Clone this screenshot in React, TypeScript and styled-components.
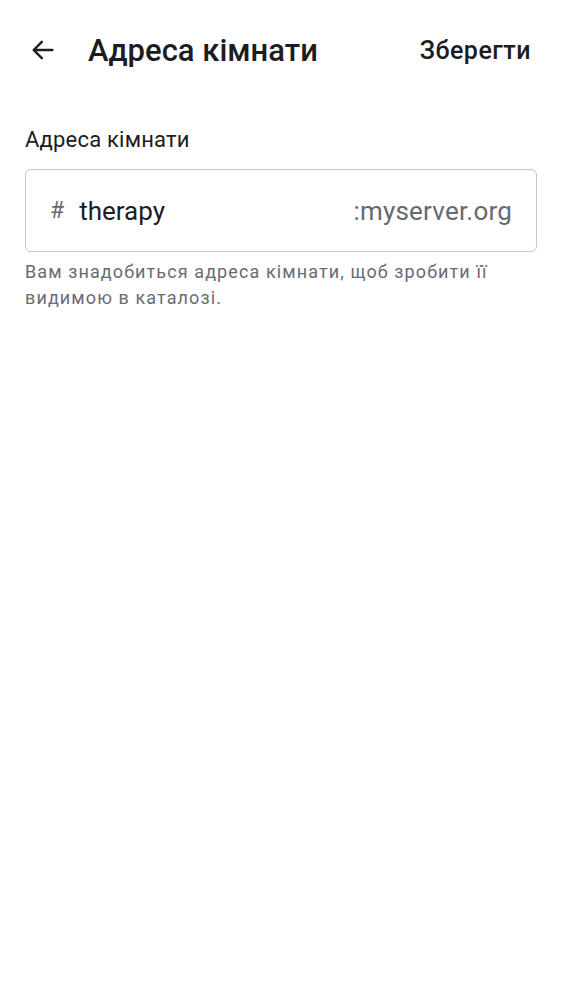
import styled, { createGlobalStyle } from "styled-components";

const GlobalStyle = createGlobalStyle`
  html, body {
    margin: 0;
    padding: 0;
    background: #ffffff;
    font-family: Roboto, "Noto Sans", sans-serif;
    color: #1b1d22;
  }
`;

export default function App() {
  return (
    <Page>
      <GlobalStyle />
      <TopBar>
        <BackButton aria-label="Назад">
          <svg width="28" height="28" viewBox="0 0 24 24" fill="none">
            <path
              d="M20 12H4.5M11 5l-7 7 7 7"
              stroke="#1b1d22"
              strokeWidth="2.1"
              strokeLinecap="round"
              strokeLinejoin="round"
            />
          </svg>
        </BackButton>
        <Title>Адреса кімнати</Title>
        <SaveButton>Зберегти</SaveButton>
      </TopBar>
      <Content>
        <FieldLabel>Адреса кімнати</FieldLabel>
        <InputBox>
          <Prefix>#</Prefix>
          <Value>therapy</Value>
          <Suffix>:myserver.org</Suffix>
        </InputBox>
        <Hint>Вам знадобиться адреса кімнати, щоб зробити її видимою в каталозі.</Hint>
      </Content>
    </Page>
  );
}

const Page = styled.div`
  width: 562px;
  min-height: 1000px;
  background: #ffffff;
`;

const TopBar = styled.div`
  display: flex;
  align-items: center;
  height: 100px;
  padding: 0 31px 0 29px;
  box-sizing: border-box;
`;

const BackButton = styled.button`
  display: flex;
  align-items: center;
  justify-content: center;
  border: 0;
  background: none;
  padding: 0;
  width: 28px;
  height: 28px;
  margin-right: 31px;
`;

const Title = styled.h1`
  flex: 1;
  margin: 0;
  font-size: 31px;
  font-weight: 500;
  color: #1b1d22;
`;

const SaveButton = styled.button`
  border: 0;
  background: none;
  padding: 0;
  font-family: Roboto, sans-serif;
  font-size: 25px;
  font-weight: 500;
  letter-spacing: 0.5px;
  color: #1b1d22;
`;

const Content = styled.div`
  display: flex;
  flex-direction: column;
  padding: 25px 25px 0 25px;
`;

const FieldLabel = styled.div`
  font-size: 22px;
  line-height: 30px;
  letter-spacing: 0.2px;
  color: #1b1d22;
  margin-bottom: 14px;
`;

const InputBox = styled.div`
  display: flex;
  align-items: center;
  height: 83px;
  box-sizing: border-box;
  border: 1px solid #c4c7cc;
  border-radius: 6px;
  padding: 0 24px 0 24px;
  font-size: 26px;
`;

const Prefix = styled.span`
  color: #656a72;
  font-size: 23px;
  margin-right: 15px;
`;

const Value = styled.span`
  flex: 1;
  color: #1b1d22;
`;

const Suffix = styled.span`
  color: #656a72;
  letter-spacing: 0.2px;
`;

const Hint = styled.p`
  margin: 7px 0 0;
  font-size: 18px;
  line-height: 26px;
  letter-spacing: 1.1px;
  color: #676c73;
  padding-right: 40px;
`;
